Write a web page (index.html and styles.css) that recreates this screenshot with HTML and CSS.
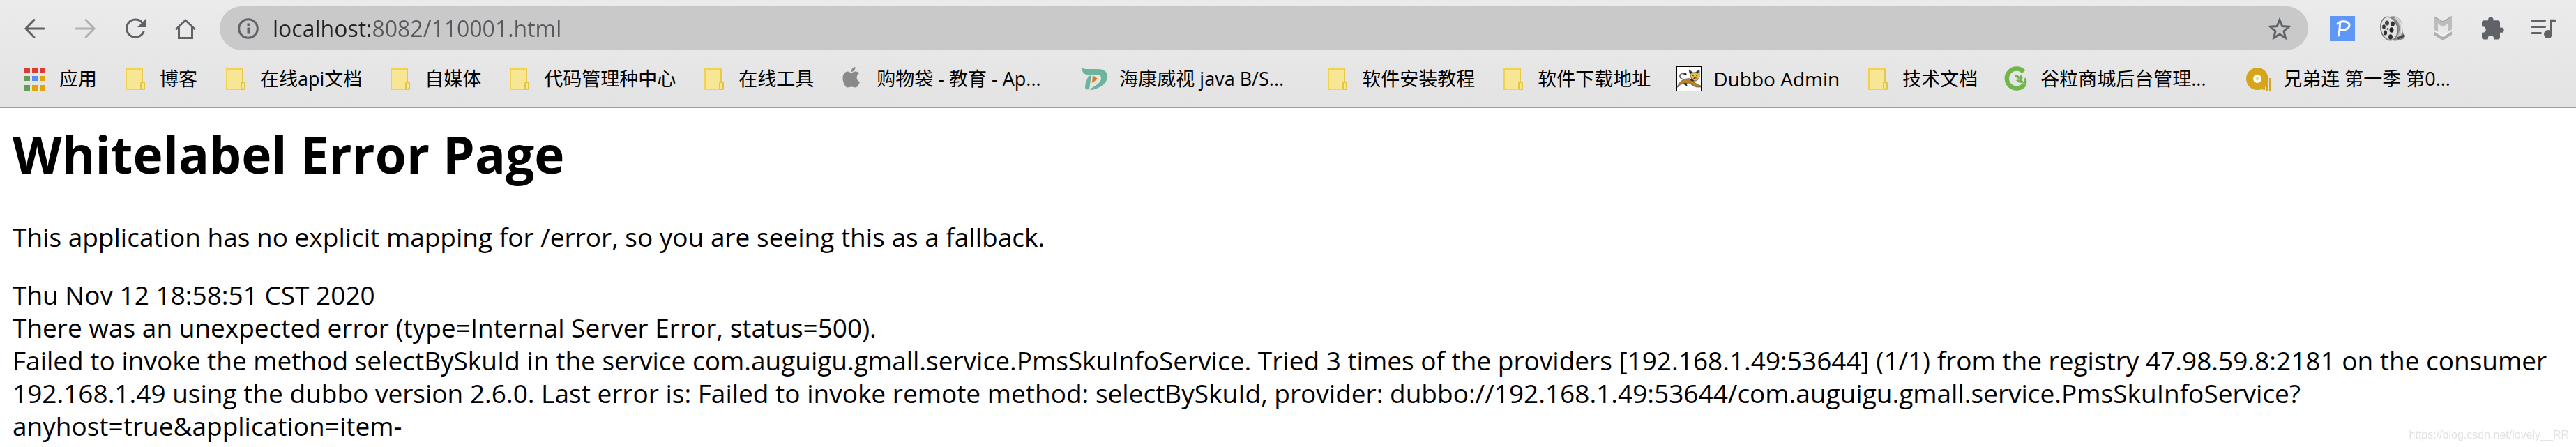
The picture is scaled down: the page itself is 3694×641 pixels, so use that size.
FILE: index.html
```html
<!DOCTYPE html>
<html lang="en">
<head>
<meta charset="UTF-8">
<meta name="viewport" content="width=device-width, initial-scale=1.0">
<title>localhost:8082/110001.html</title>
<link rel="stylesheet" href="styles.css">
</head>
<body>
<svg class="sprite" aria-hidden="true">
<symbol id="folder" viewBox="0 0 36 36">
<path d="M5 3h23v20l3 1v9H5z" fill="#f7e694" stroke="#f0d250" stroke-width="2" stroke-linejoin="round"/>
<path d="M5 3.5h23" stroke="#f2d44a" stroke-width="3"/>
<path d="M28 4v19" stroke="#dfbf45" stroke-width="1"/>
<rect x="26" y="23" width="5" height="10" rx="2" fill="#f7e694" stroke="#e3c546" stroke-width="2"/>
</symbol>
</svg>

<header class="browser">
<div class="toolbar">
<div class="nav-buttons">
<button type="button" aria-label="Back">
<svg viewBox="0 0 36 36"><path d="M31 18H6M17 5.500L5 18l12 12.500" class="line"/></svg>
</button>
<button type="button" aria-label="Forward" disabled>
<svg viewBox="0 0 36 36"><path d="M5 18h25M19 5.500L31 18 19 30.500" class="line"/></svg>
</button>
<button type="button" aria-label="Reload">
<svg viewBox="0 0 36 36"><path d="M30 22.500A12.700 12.700 0 1 1 27.500 9" class="line"/><path d="M33 4v12H21z"/></svg>
</button>
<button type="button" aria-label="Home">
<svg viewBox="0 0 36 36"><path d="M5 18.500L18 6l13 12.500M8.500 16v15.500h19V16" class="line"/></svg>
</button>
</div>
<form class="address-bar">
<button type="button" class="info" aria-label="View site information">
<svg viewBox="0 0 30 30"><circle cx="15" cy="15" r="13.300" class="line"/><path d="M13.500 13.500h3.500v9h-3.500zM13.500 7.500h3.500v3.500h-3.500z"/></svg>
</button>
<input type="text" class="url" aria-label="Address" value="localhost:8082/110001.html">
<button type="button" class="star" aria-label="Bookmark this page">
<svg viewBox="0 0 36 36"><path d="M18 5.500l3.700 9 9.800.8-7.500 6.400 2.300 9.600L18 26.200l-8.300 5.100L12 21.700l-7.500-6.400 9.800-.8z" class="line"/></svg>
</button>
</form>
<div class="extensions">
<button type="button" aria-label="P">
<svg viewBox="0 0 36 36">
<rect width="36" height="36" fill="#5e97f6"/>
<path d="M12.500 28C14 22 14.500 15 14.500 9M11 11C14 8 19 7.500 22 8c5.500 1 7 4 5.500 7.500C26 19 20.500 20.500 16 20" fill="none" stroke="#fff" stroke-width="3" stroke-linecap="round"/>
</svg>
</button>
<button type="button" aria-label="Video downloader">
<svg viewBox="0 0 36 36">
<path d="M14 1c11-3 18 5 18 15 0 7 1 10 4 11l-1 5c-6 3-12 4-18 3z" fill="#8a8a8a"/>
<path d="M21 2c7 3 10 11 9 19-1 5-3 9-6 11" fill="none" stroke="#c9c9c9" stroke-width="4"/>
<path d="M25 3c6 5 7 14 5 22" fill="none" stroke="#f0f0f0" stroke-width="1"/>
<path d="M25 32l10-4" stroke="#444" stroke-width="3"/>
<ellipse cx="13" cy="18" rx="12" ry="17" transform="rotate(-12 13 18)" fill="#e2e2e2" stroke="#777" stroke-width="1.500"/>
<ellipse cx="10" cy="10" rx="3" ry="3.500" fill="#444"/>
<ellipse cx="18" cy="11" rx="3" ry="3.500" fill="#333"/>
<ellipse cx="5.500" cy="15.500" rx="2.300" ry="3.300" fill="#333"/>
<ellipse cx="16.500" cy="20" rx="3" ry="3.800" fill="#222"/>
<ellipse cx="7.500" cy="24" rx="2.600" ry="3.500" fill="#333"/>
<ellipse cx="15" cy="30" rx="3" ry="3.800" fill="#333"/>
<circle cx="11" cy="18.500" r="1.500" fill="#555"/>
</svg>
</button>
<button type="button" aria-label="WebAdvisor">
<svg viewBox="0 0 36 36">
<path d="M5 0l13 7.500L31 0v19.500l-6 3.500V11l-7 4.500-7-4.500v12l-6-3.500z" fill="#bdbdbd"/>
<path d="M5 .5L18 8 31 .5" fill="none" stroke="#999" stroke-width="1"/>
<path d="M5 20.500l13 8 13-8" fill="none" stroke="#f5f5f5" stroke-width="2"/>
<path d="M5 22l13 8 13-8v5l-13 8-13-8z" fill="#b0b0b0"/>
</svg>
</button>
<button type="button" aria-label="Extensions">
<svg viewBox="0 0 36 36"><path d="M30 16.500h-2V9.500A3.300 3.300 0 0 0 24.700 6.200H18.500V5.200a3.700 3.700 0 0 0-7.400 0v1H5.300A3.300 3.300 0 0 0 2 9.500v5.700h1.500a4.300 4.300 0 0 1 0 8.600H2v6.400a3.300 3.300 0 0 0 3.300 3.300h5.500V32a4.100 4.100 0 0 1 8.200 0v1.500h5.700A3.300 3.300 0 0 0 28 30.200v-6.400h2a3.650 3.650 0 0 0 0-7.300z"/></svg>
</button>
<button type="button" aria-label="Media controls">
<svg viewBox="0 0 36 36"><path d="M2 6.500h18.500M2 15.500h18.500M2 24.500h12.500" class="line"/><circle cx="25" cy="26" r="6"/><path d="M27 26V4.700h7.500a1.800 1.800 0 0 1 0 3.600H31V26z"/></svg>
</button>
</div>
</div>

<nav class="bookmarks" aria-label="Bookmarks">
<a href="#">
<svg viewBox="0 0 36 36">
<path d="M3 2h8v8H3zM14 2h8v8h-8zM26 2h7v8h-7z" fill="#dc3c30"/>
<path d="M3 14h8v7H3zM3 27h8v8H3z" fill="#5fa055"/>
<path d="M14 14h8v7h-8z" fill="#5a90f6"/>
<path d="M26 14h7v7h-7zM14 27h8v8h-8zM26 27h7v8h-7z" fill="#e0a40c"/>
</svg>
<span>应用</span></a>
<a href="#"><svg><use href="#folder"/></svg><span>博客</span></a>
<a href="#"><svg><use href="#folder"/></svg><span>在线api文档</span></a>
<a href="#"><svg><use href="#folder"/></svg><span>自媒体</span></a>
<a href="#"><svg><use href="#folder"/></svg><span>代码管理种中心</span></a>
<a href="#"><svg><use href="#folder"/></svg><span>在线工具</span></a>
<a href="#" class="long">
<svg viewBox="0 0 36 36">
<path d="M22.500 1c.3 4-2.500 7-6 7-.2-3.500 2.500-6.500 6-7zM16.500 9.500c1.500 0 3.500-2 6.500-2 2 0 4 1 5 2.800-5 3.200-4.200 10.200 1 12.200-1.500 4.500-4 8-6.500 8-2 0-3-1-5.500-1s-3.500 1-5.500 1C8 30.500 4.500 23 4.500 17c0-6 3.500-9.500 7-9.500 2.300 0 3.700 2 5 2z" fill="#8a8a8a"/>
</svg>
<span>购物袋 - 教育 - Ap...</span></a>
<a href="#" class="long">
<svg viewBox="0 0 36 36">
<path d="M0 2c2 2 4 2 7 2h15c10 0 14 4 14 11 0 9-9 16-22 19l-4-1c9-5 17-9 17-16 0-4-3-5-8-5H8C3 12-1 9 0 2z" fill="#6db49c"/>
<path d="M9 14l4-1-3 20c-4 1-6 0-6-3 0-5 2-10 5-16z" fill="#6db49c"/>
<path d="M15 13l7 5-8 6z" fill="#d97b1c"/>
</svg>
<span>海康威视 java B/S...</span></a>
<a href="#"><svg><use href="#folder"/></svg><span>软件安装教程</span></a>
<a href="#"><svg><use href="#folder"/></svg><span>软件下载地址</span></a>
<a href="#" class="latin">
<svg viewBox="0 0 36 36">
<rect x=".5" y=".5" width="35" height="35" fill="#fff" stroke="#000"/>
<path d="M13 19C8 19 4 17 5 13c1-3 6-3 8-1" fill="none" stroke="#555" stroke-width="1.500"/>
<path d="M10 11l4-1 1 3z"/>
<path d="M1 30c3-8 9-12 14-12 5-1 6 0 8 3 4 3 8 6 12 7v2h-6c-4-1-8-4-11-6l-6 1c-5 0-8 2-10 5z" fill="#b98420" stroke="#555" stroke-width=".7"/>
<path d="M9 25l7 4-2-5zM19 20l4-2 3 4z" fill="#222"/>
<path d="M18 5l5 4h4l6-4v9c0 4-3 7-6 7s-7-4-7-8z" fill="#e9bd4b" stroke="#444" stroke-width=".8"/>
<path d="M18 5l5 4-3 2zM33 5l-5 4 3 1zM22 13l3 1M30 12l-2 2M24 18l2-2 3 1" fill="#222" stroke="#555"/>
</svg>
<span>Dubbo Admin</span></a>
<a href="#"><svg><use href="#folder"/></svg><span>技术文档</span></a>
<a href="#" class="long">
<svg viewBox="0 0 36 36">
<path d="M29 8A14 14 0 1 0 30 26" fill="none" stroke="#71b54d" stroke-width="6.500"/>
<path d="M16 12c4 0 7 2 8 6-4 0-7-2-8-6zM25 12c3 3 3 6 1 9-3-3-3-6-1-9zM18 20c4-2 8 0 11 3-4 2-8 1-11-3zM31 16c3 4 3 8 1 11-3-3-3-7-1-11z" fill="#71b54d"/>
<path d="M22 16l10 11" stroke="#71b54d" stroke-width="1.500"/>
</svg>
<span>谷粒商城后台管理...</span></a>
<a href="#" class="long">
<svg viewBox="0 0 36 36">
<path d="M16 2c9 0 15.500 7 15.500 16v17H29v-6l-2 1v4c-3 0-4-1-5-1-2 1-4 1-6 1C7 34 0 27 0 18S7 2 16 2zM33 17h3v18h-3z" fill="#d5a51c"/>
<circle cx="16" cy="18" r="6" fill="#fff"/>
<circle cx="16" cy="18" r="2.500" fill="#f0dca0"/>
</svg>
<span>兄弟连 第一季 第0...</span></a>
</nav>
</header>

<main class="error-page">
<h1>Whitelabel Error Page</h1>
<p>This application has no explicit mapping for /error, so you are seeing this as a fallback.</p>
<div>Thu Nov 12 18:58:51 CST 2020</div>
<div>There was an unexpected error (type=Internal Server Error, status=500).</div>
<div>Failed to invoke the method selectBySkuId in the service com.auguigu.gmall.service.PmsSkuInfoService. Tried 3 times of the providers [192.168.1.49:53644] (1/1) from the registry 47.98.59.8:2181 on the consumer 192.168.1.49 using the dubbo version 2.6.0. Last error is: Failed to invoke remote method: selectBySkuId, provider: dubbo://192.168.1.49:53644/com.auguigu.gmall.service.PmsSkuInfoService?anyhost=true&amp;application=item-</div>
</main>
<div class="watermark">https://blog.csdn.net/lovely__RR</div>
</body>
</html>
```
FILE: styles.css
```css
body {
font-family: "Open Sans", "Noto Sans CJK SC", sans-serif;
margin: 0;
background-color: #fff;
color: #000;
}

.sprite {
display: none;
}

/* Browser bar */
.browser {
background: linear-gradient(#ebebeb, #e3e3e3);
border-bottom: 2px solid #9c9c9c;
}

.toolbar {
display: flex;
align-items: center;
gap: 31px;
padding: 9px 29px 0 32px;
}

.nav-buttons, .extensions {
display: flex;
gap: 36px;
}

button {
display: block;
width: 36px;
height: 36px;
padding: 0;
border: none;
background: none;
color: #5f6368;
cursor: pointer;
}

button:disabled {
color: #b0b2b4;
}

svg {
display: block;
width: 36px;
height: 36px;
fill: currentColor;
}

.line {
fill: none;
stroke: currentColor;
stroke-width: 3;
stroke-linecap: round;
}

.address-bar {
display: flex;
flex: 1;
align-items: center;
height: 63px;
padding: 0 23px 0 26px;
border-radius: 32px;
background-color: #c9c9c9;
}

.info, .info svg {
width: 30px;
height: 30px;
}

.star .line {
stroke-linecap: butt;
}

/* host is darker than the port and path */
.url {
flex: 1;
height: 63px;
margin: 0 20px;
padding: 0;
border: none;
outline: none;
font: 32px "Open Sans", sans-serif;
color: transparent;
background: linear-gradient(90deg, #202124 139px, #55585c 139px);
-webkit-background-clip: text;
background-clip: text;
}

/* Bookmarks */
.bookmarks {
display: flex;
gap: 37px;
padding: 23px 32px 22px;
overflow: hidden;
}

.bookmarks a {
display: flex;
flex: none;
align-items: center;
gap: 17px;
height: 36px;
color: #000;
font-size: 27px;
line-height: 36px;
text-decoration: none;
white-space: nowrap;
}

.bookmarks .long span {
width: 258px;
}

.bookmarks .latin {
font-size: 28px;
}

/* Error page */
.error-page {
padding: 18px;
font-size: 37px;
line-height: 47px;
}

h1 {
margin: 0 0 48px;
font-size: 73px;
line-height: 95px;
}

p {
margin: 0 0 36px;
}

.watermark {
position: fixed;
right: 10px;
bottom: 8px;
color: #e2e2e2;
font: 16px "Liberation Sans", Arial, sans-serif;
}
```
